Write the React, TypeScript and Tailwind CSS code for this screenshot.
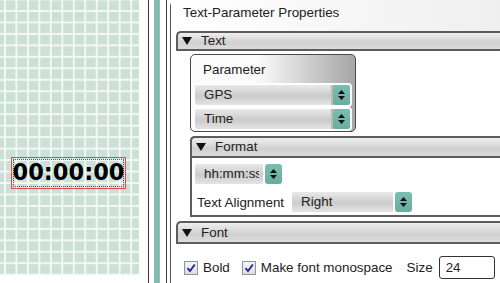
import { clsx } from 'clsx'

const SANS = "font-['Liberation_Sans',Arial,sans-serif]"

function Arrows() {
  return (
    <svg width="7" height="10" viewBox="0 0 7 10">
      <polygon points="0,4 7,4 3.5,0" fill="#111" />
      <polygon points="0,6 7,6 3.5,10" fill="#111" />
    </svg>
  )
}

function Triangle() {
  return (
    <svg width="10" height="8" viewBox="0 0 10 8" className="shrink-0">
      <polygon points="0,0 10,0 5,8" fill="#111" />
    </svg>
  )
}

interface SelectProps {
  text: string
  width: string
  ring?: boolean
}

function Select({ text, width, ring }: SelectProps) {
  return (
    <div
      className={clsx(
        'flex h-[20px] gap-[2px] shrink-0',
        width,
        ring && 'rounded-[4px] border-2 border-white h-[24px] box-border',
      )}
    >
      <div className="flex-1 min-w-0 pl-[9px] pr-[4px] leading-[20px] rounded-l-[2px] bg-[linear-gradient(to_bottom,#e9e9e9,#cbcbcb_55%,#e4e4e4)]">
        <div className="overflow-hidden whitespace-nowrap">{text}</div>
      </div>
      <div className="w-[17px] shrink-0 flex items-center justify-center rounded-[3px] bg-[linear-gradient(to_bottom,#7cbdb1,#67ada0)]">
        <Arrows />
      </div>
    </div>
  )
}

function SectionBar({ label, className }: { label: string; className?: string }) {
  return (
    <div
      className={clsx(
        'flex items-center gap-[9px] border-2 border-r-0 border-[#5c5c5c] rounded-tl-[5px] bg-[linear-gradient(to_bottom,#eeeeee,#d0d0d0_60%,#dcdcdc)]',
        className,
      )}
    >
      <Triangle />
      <span>{label}</span>
    </div>
  )
}

function Check({ label }: { label: string }) {
  return (
    <div className="flex items-center gap-[5px] shrink-0 whitespace-nowrap">
      <span className="w-[14px] h-[14px] shrink-0 border border-[#8a94a8] bg-[linear-gradient(to_bottom,#f4f4f4,#dedede)] flex items-center justify-center">
        <svg width="10" height="10" viewBox="0 0 10 10">
          <path d="M1.5 5.2 L4 8 L8.8 1.5" stroke="#22229a" strokeWidth="1.8" fill="none" />
        </svg>
      </span>
      <span>{label}</span>
    </div>
  )
}

export default function App() {
  return (
    <div className={clsx('flex w-[500px] h-[283px] bg-white overflow-hidden text-[13.4px] text-[#222]', SANS)}>
      {/* canvas */}
      <div className="w-[139px] h-[275px] shrink-0 bg-[#cde0d7] bg-[linear-gradient(to_right,#f3f8f6_2px,transparent_2px),linear-gradient(to_bottom,#f3f8f6_2px,transparent_2px)] [background-size:11.47px_11.47px] [background-position:4px_10px] pt-[157px] pl-[11px]">
        <div className="w-[115px] h-[32px] border border-[#e24848] p-px">
          <div className="h-full border border-dotted border-[#555] flex items-center justify-center font-['DejaVu_Sans',sans-serif] font-bold text-[22.5px] text-black">
            00:00:00
          </div>
        </div>
      </div>

      {/* splitter */}
      <div className="w-[9px] shrink-0" />
      <div className="w-px shrink-0 bg-[#3a3a3a]" />
      <div className="w-[5px] shrink-0" />
      <div className="w-[5px] shrink-0 bg-[#7dbdb2]" />
      <div className="w-px shrink-0 bg-[#a8b4b0]" />
      <div className="w-[6px] shrink-0" />
      <div className="w-px shrink-0 bg-[#3a3a3a]" />
      <div className="w-[3px] shrink-0" />

      {/* properties panel */}
      <div className="flex-1 min-w-0 border-l border-[#555] rounded-tl-[6px] flex flex-col">
        <div className="h-[32px] shrink-0 pl-[12px] pt-[3px] bg-[linear-gradient(to_right,#ffffff,#efefef)]">
          Text-Parameter Properties
        </div>

        <div className="pl-[5px]">
          <SectionBar label="Text" className="h-[20px] pl-[4px] -mt-px" />

          <div className="pl-[14px] pt-[3px]">
            <div className="w-[166px] h-[78px] border border-[#4a4a4a] rounded-[5px] bg-[linear-gradient(to_right,#fbfbfb_40%,#a6a6a6)] px-[2px] pt-[5px]">
              <div className="pl-[10px] h-[23px] leading-[20px]">Parameter</div>
              <Select text="GPS" width="w-[159px]" ring />
              <Select text="Time" width="w-[159px]" ring />
            </div>

            <div className="mt-[4px] border-l-2 border-b-2 border-[#5c5c5c] rounded-tl-[5px]">
              <SectionBar label="Format" className="h-[22px] pl-[4px] -ml-[2px] border-l-2" />
              <div className="pl-[3px] pt-[6px] pb-[2px] flex flex-col gap-[6px]">
                <Select text="hh:mm:ss" width="w-[87px]" />
                <div className="flex items-center gap-[8px] pl-[2px] whitespace-nowrap">
                  <span className="pt-[3px]">Text Alignment</span>
                  <Select text="Right" width="w-[120px]" />
                </div>
              </div>
            </div>
          </div>

          <SectionBar label="Font" className="h-[23px] pl-[4px] mt-[4px]" />

          <div className="flex items-center pl-[8px] pt-[12px] whitespace-nowrap">
            <Check label="Bold" />
            <div className="w-[12px] shrink-0" />
            <Check label="Make font monospace" />
            <span className="ml-[14px] shrink-0">Size</span>
            <div className="ml-[6px] w-[56px] h-[23px] shrink-0 border border-[#333] rounded-[3px] pl-[6px] leading-[21px]">
              24
            </div>
          </div>
        </div>
      </div>
    </div>
  )
}
